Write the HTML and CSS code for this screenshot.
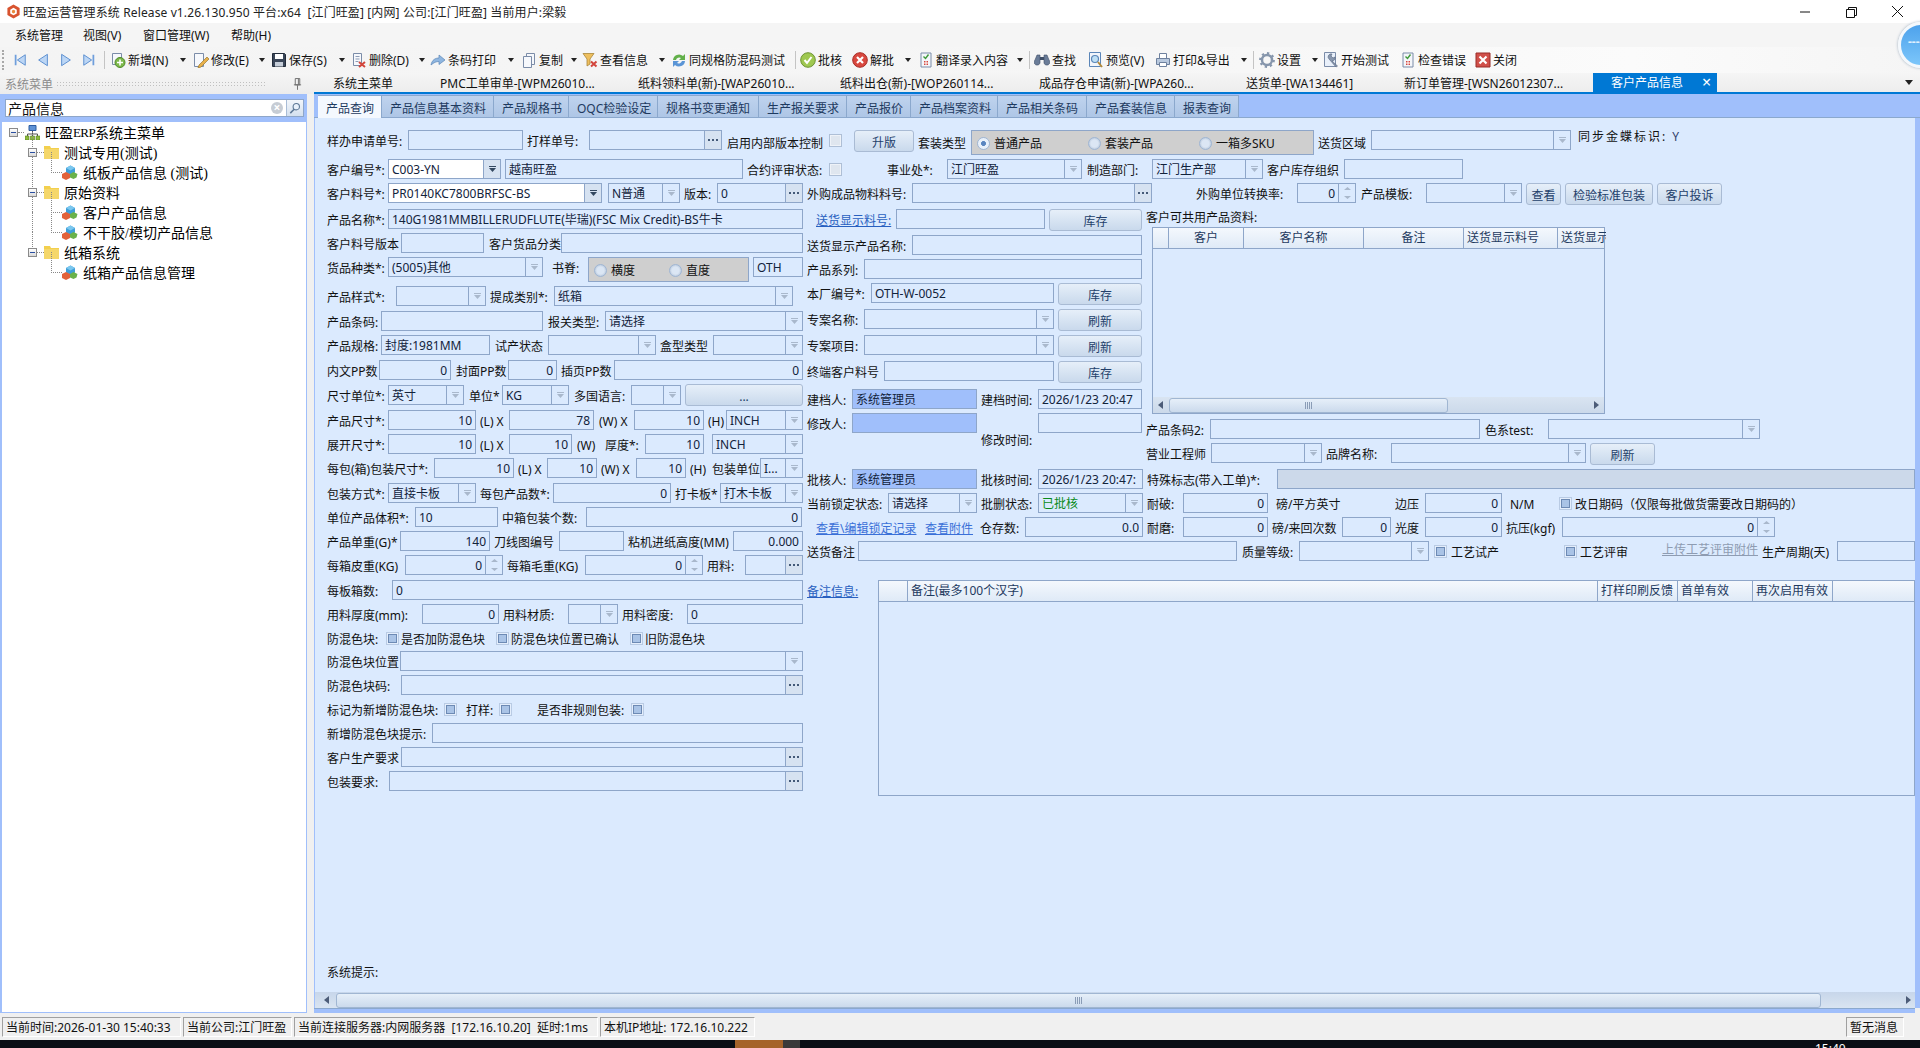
FILE: index.html
```html
<!DOCTYPE html>
<html>
<head>
  <meta charset="utf-8">
  <title>旺盈运营管理系统</title>
  <link rel="stylesheet" href="styles.css">
</head>
<body>
<svg class="defs" width="0" height="0">
  <symbol id="i-first" viewBox="0 0 16 16"><path d="M2 2h2v12H2z" fill="#6f9fdc"/><path d="M14 2v12L5 8z" fill="#bcd6f5" stroke="#4f86cc"/></symbol>
  <symbol id="i-prev" viewBox="0 0 16 16"><path d="M13 1.500v13L3 8z" fill="#bcd6f5" stroke="#4f86cc"/></symbol>
  <symbol id="i-next" viewBox="0 0 16 16"><path d="M3 1.500v13L13 8z" fill="#bcd6f5" stroke="#4f86cc"/></symbol>
  <symbol id="i-last" viewBox="0 0 16 16"><path d="M12 2h2v12h-2z" fill="#6f9fdc"/><path d="M2 2v12l9-6z" fill="#bcd6f5" stroke="#4f86cc"/></symbol>
  <symbol id="i-new" viewBox="0 0 16 16"><path d="M2.500 1.500h9v11h-9z" fill="#f6f8fc" stroke="#7b8ca8"/><circle cx="10" cy="10.500" r="5" fill="#7cb84a" stroke="#4f8a2a"/><path d="M10 7.500v6M7 10.500h6" stroke="#fff" stroke-width="1.600"/></symbol>
  <symbol id="i-edit" viewBox="0 0 16 16"><path d="M1.500 1.500h9v13h-9z" fill="#f6f8fc" stroke="#7b8ca8"/><path d="M14 5l2 2-8 8-3 1 1-3z" fill="#e8b04a" stroke="#9a7a30" stroke-width=".7"/></symbol>
  <symbol id="i-save" viewBox="0 0 16 16"><path d="M1.500 1.500h12l1 1v12h-13z" fill="#3a4658" stroke="#222c3a"/><path d="M4 2h8v5H4z" fill="#fff"/><path d="M4 10h8v4.500H4z" fill="#c6ced9"/></symbol>
  <symbol id="i-del" viewBox="0 0 16 16"><path d="M2.500 1.500h8v12h-8z" fill="#f6f8fc" stroke="#7b8ca8"/><path d="M4.500 4.500h4M4.500 7h4M4.500 9.500h3" stroke="#8c9bb5"/><path d="M8 10l6 5M14 10l-6 5" stroke="#d2453c" stroke-width="2"/></symbol>
  <symbol id="i-send" viewBox="0 0 16 16"><path d="M1 13c1-5 4-7 8-7V3l6 5-6 4.500V9.500c-3 0-5 1-8 3.500z" fill="#8fb6e0" stroke="#5b86b8" stroke-width=".7"/></symbol>
  <symbol id="i-copy" viewBox="0 0 16 16"><path d="M5.500 1.500h8v11h-8z" fill="#f6f8fc" stroke="#7b8ca8"/><path d="M2.500 4.500h8v11h-8z" fill="#f6f8fc" stroke="#7b8ca8"/></symbol>
  <symbol id="i-view" viewBox="0 0 16 16"><path d="M1 1.500h11L8 7v5l-3 2V7z" fill="#eebf5e" stroke="#a9863a" stroke-width=".8"/><path d="M9 9.500l5.500 5M14.500 9.500L9 14.500" stroke="#d2453c" stroke-width="2"/></symbol>
  <symbol id="i-sync" viewBox="0 0 16 16"><path d="M2 8a6 6 0 0 1 10-4l2-2v6H8l2-2a3.500 3.500 0 0 0-5 2z" fill="#62b04a"/><path d="M14 9a6 6 0 0 1-10 4l-2 2V9h6l-2 2a3.500 3.500 0 0 0 5-2z" fill="#5b95d6"/></symbol>
  <symbol id="i-ok" viewBox="0 0 16 16"><circle cx="8" cy="8" r="7.300" fill="#9fc850" stroke="#6e9434"/><path d="M4.500 8l2.500 3 4.500-6" fill="none" stroke="#fff" stroke-width="2"/></symbol>
  <symbol id="i-no" viewBox="0 0 16 16"><circle cx="8" cy="8" r="7.300" fill="#d8483f" stroke="#a92c26"/><path d="M5 5l6 6M11 5l-6 6" stroke="#fff" stroke-width="2.200"/></symbol>
  <symbol id="i-list" viewBox="0 0 16 16"><path d="M3 1h10v14H3z" fill="#f4f6fa" stroke="#7b8ca8"/><path d="M5.500 4.500l2 2 3-4" fill="none" stroke="#3f9a3a" stroke-width="1.400"/><path d="M6 9h4v4H6z" fill="#d2453c"/><path d="M6 11h4M8 9v4" stroke="#fff"/></symbol>
  <symbol id="i-find" viewBox="0 0 16 16"><path d="M1 8l2-5h3v8a3 3 0 1 1-5-3zM15 8l-2-5h-3v8a3 3 0 1 0 5-3z" fill="#6a7c98" stroke="#3f4f68" stroke-width=".6"/><path d="M6 5h4v3H6z" fill="#3f4f68"/></symbol>
  <symbol id="i-zoom" viewBox="0 0 16 16"><path d="M1.500 .5h11v14h-11z" fill="#f1f5fb" stroke="#5b86b8"/><circle cx="7" cy="7" r="3.500" fill="#bfe0f5" stroke="#5b86b8" stroke-width="1.200"/><path d="M10 10l4 5" stroke="#b48a3a" stroke-width="2"/></symbol>
  <symbol id="i-print" viewBox="0 0 16 16"><path d="M4.500 1.500h7v5h-7z" fill="#fff" stroke="#6e819e"/><path d="M1.500 6.500h13v6h-13z" fill="#b9c9de" stroke="#6e819e"/><path d="M4.500 10.500h7v4h-7z" fill="#fff" stroke="#6e819e"/></symbol>
  <symbol id="i-gear" viewBox="0 0 16 16"><circle cx="8" cy="8" r="5" fill="none" stroke="#8696ac" stroke-width="2.500"/><circle cx="8" cy="8" r="6.800" fill="none" stroke="#8696ac" stroke-width="2.200" stroke-dasharray="2.300 3"/></symbol>
  <symbol id="i-tool" viewBox="0 0 16 16"><path d="M1.500 .5h11v14h-11z" fill="#e9f0fa" stroke="#7b8ca8"/><path d="M13 15L6 7a3 3 0 0 1 3-5l-1 2 2 2 2-1a3 3 0 0 1-3 4l5.500 5z" fill="#8796ad" stroke="#56657e" stroke-width=".6"/></symbol>
  <symbol id="i-close" viewBox="0 0 16 16"><path d="M1 1h14v14H1z" fill="#d0504a" stroke="#9a2c28"/><path d="M4.500 4.500l7 7M11.500 4.500l-7 7" stroke="#fff" stroke-width="2.200"/></symbol>
  <symbol id="i-net" viewBox="0 0 15 15"><path d="M4 .5h7v5H4z" fill="#5f92d6" stroke="#2d5ca0"/><path d="M7.500 6v3M2.500 11V9h10v2M7.500 9v2" fill="none" stroke="#555"/><path d="M0 11h4v4H0zM5.500 11h4v4h-4zM11 11h4v4h-4z" fill="#8dbb3c" stroke="#56801e" stroke-width=".6"/></symbol>
  <symbol id="i-folder" viewBox="0 0 15 15"><path d="M0 1h6l1 2h8v11H0z" fill="#f3d04e"/><path d="M0 4h15v10H0z" fill="#f5d76a"/></symbol>
  <symbol id="i-cube" viewBox="0 0 16 16"><path d="M4 4l4.500-2.500L13 4v4.500L8.500 11 4 8.500z" fill="#3f9fd8"/><path d="M4 4l4.500 2.500L13 4 8.500 1.500z" fill="#7cc7ee"/><path d="M0 10l4-2 4 2v4l-4 2-4-2z" fill="#e3623a"/><path d="M8 10l3.500-2 4 2-1 3.500-3 1.500-3.500-1.500z" fill="#6ab24a"/></symbol>
  <symbol id="i-logo" viewBox="0 0 16 16"><path d="M8 .5l6.500 3.700v7.600L8 15.500l-6.500-3.700V4.200z" fill="#d8532f"/><path d="M8 4l3.500 2v4L8 12l-3.500-2V6z" fill="#fff"/><path d="M8 6l1.700 1v2L8 10 6.300 9V7z" fill="#e98a3c"/></symbol>
</svg>

<div class="title-bar">
  <svg class="logo"><use href="#i-logo"/></svg>
  <span class="title-text">旺盈运营管理系统 Release v1.26.130.950 平台:x64&nbsp; [江门旺盈] [内网] 公司:[江门旺盈] 当前用户:梁毅</span>
  <span class="win-btns">
    <svg class="win-btn" viewBox="0 0 46 23"><path d="M18 12h10" stroke="#111"/></svg>
    <svg class="win-btn" viewBox="0 0 46 23"><path d="M18.500 9.500h8v8h-8zM20.500 9.500v-2h8v8h-2" fill="none" stroke="#111"/></svg>
    <svg class="win-btn" viewBox="0 0 46 23"><path d="M18 6l11 11M29 6L18 17" stroke="#111"/></svg>
  </span>
</div>

<div class="menu-bar">
  <span class="menu-item w68">系统管理</span>
  <span class="menu-item w60">视图(V)</span>
  <span class="menu-item w88">窗口管理(W)</span>
  <span class="menu-item">帮助(H)</span>
</div>

<div class="tool-bar">
  <span class="grip"></span>
  <svg class="nav"><use href="#i-first"/></svg>
  <svg class="nav"><use href="#i-prev"/></svg>
  <svg class="nav"><use href="#i-next"/></svg>
  <svg class="nav"><use href="#i-last"/></svg>
  <span class="sep"></span>
  <span class="tb w70"><svg><use href="#i-new"/></svg>新增(N)</span><i class="ar w13"></i>
  <span class="tb w66"><svg><use href="#i-edit"/></svg>修改(E)</span><i class="ar w12"></i>
  <span class="tb w68"><svg><use href="#i-save"/></svg>保存(S)</span><i class="ar w12"></i>
  <span class="tb w68"><svg><use href="#i-del"/></svg>删除(D)</span><i class="ar w11"></i>
  <span class="tb w78"><svg><use href="#i-send"/></svg>条码打印</span><i class="ar w13"></i>
  <span class="tb w50"><svg><use href="#i-copy"/></svg>复制</span><i class="ar w11"></i>
  <span class="tb w77"><svg><use href="#i-view"/></svg>查看信息</span><i class="ar w12"></i>
  <span class="tb w124"><svg><use href="#i-sync"/></svg>同规格防混码测试</span>
  <span class="sep2"></span>
  <span class="tb w52"><svg><use href="#i-ok"/></svg>批核</span>
  <span class="tb w53"><svg><use href="#i-no"/></svg>解批</span><i class="ar w13"></i>
  <span class="tb w99"><svg><use href="#i-list"/></svg>翻译录入内容</span><i class="ar w12"></i>
  <span class="sep2"></span>
  <span class="tb w54"><svg><use href="#i-find"/></svg>查找</span>
  <span class="tb w67"><svg><use href="#i-zoom"/></svg>预览(V)</span>
  <span class="tb w86"><svg><use href="#i-print"/></svg>打印&amp;导出</span><i class="ar w12"></i>
  <span class="sep3"></span>
  <span class="tb w53"><svg><use href="#i-gear"/></svg>设置</span><i class="ar w11"></i>
  <span class="tb w77"><svg><use href="#i-tool"/></svg>开始测试</span>
  <span class="tb w75"><svg><use href="#i-list"/></svg>检查错误</span>
  <span class="tb"><svg><use href="#i-close"/></svg>关闭</span>
</div>
<div class="float-ball"><span>---</span></div>

<div class="middle">
  <div class="side">
    <div class="side-head">
      <span>系统菜单</span>
      <span class="side-dots"></span>
      <svg class="pin" viewBox="0 0 10 14"><path d="M2.500 1.500h5v7h-5zM1 8.500h8M5 9v5M6 2v6" fill="none" stroke="#666"/></svg>
    </div>
    <div class="side-body">
      <div class="search">
        <span class="search-text">产品信息</span>
        <span class="search-clear">×</span>
        <span class="search-btn"><svg viewBox="0 0 14 14"><circle cx="8.500" cy="5.500" r="3.700" fill="#e8f1fb" stroke="#5d7896" stroke-width="1.300"/><path d="M6 8.500L1.500 13" stroke="#5d7896" stroke-width="1.800"/></svg></span>
      </div>
      <div class="tree">
        <div class="node lv1"><i class="box"></i><svg class="t-icon"><use href="#i-net"/></svg>旺盈<span class="latin">ERP</span>系统主菜单</div>
        <div class="node lv2"><i class="box"></i><svg class="t-icon"><use href="#i-folder"/></svg>测试专用(测试)</div>
        <div class="node lv3"><svg class="t-icon"><use href="#i-cube"/></svg>纸板产品信息 (测试)</div>
        <div class="node lv2"><i class="box"></i><svg class="t-icon"><use href="#i-folder"/></svg>原始资料</div>
        <div class="node lv3"><svg class="t-icon"><use href="#i-cube"/></svg>客户产品信息</div>
        <div class="node lv3"><svg class="t-icon"><use href="#i-cube"/></svg>不干胶/模切产品信息</div>
        <div class="node lv2"><i class="box"></i><svg class="t-icon"><use href="#i-folder"/></svg>纸箱系统</div>
        <div class="node lv3 end"><svg class="t-icon"><use href="#i-cube"/></svg>纸箱产品信息管理</div>
      </div>
    </div>
  </div>

  <div class="work">
    <div class="doc-tabs">
      <span class="doc-tab w107">系统主菜单</span>
      <span class="doc-tab w198">PMC工单审单-[WPM26010...</span>
      <span class="doc-tab w202">纸料领料单(新)-[WAP26010...</span>
      <span class="doc-tab w199">纸料出仓(新)-[WOP260114...</span>
      <span class="doc-tab w207">成品存仓申请(新)-[WPA260...</span>
      <span class="doc-tab w158">送货单-[WA134461]</span>
      <span class="doc-tab w189">新订单管理-[WSN26012307...</span>
      <span class="doc-active">客户产品信息<b>×</b></span>
      <i class="doc-more"></i>
    </div>
    <div class="tabs">
      <span class="tab tab-on w64">产品查询</span>
      <span class="tab w112">产品信息基本资料</span>
      <span class="tab w75">产品规格书</span>
      <span class="tab w89">OQC检验设定</span>
      <span class="tab w101">规格书变更通知</span>
      <span class="tab w88">生产报关要求</span>
      <span class="tab w64">产品报价</span>
      <span class="tab w87">产品档案资料</span>
      <span class="tab w89">产品相关条码</span>
      <span class="tab w88">产品套装信息</span>
      <span class="tab w64">报表查询</span>
    </div>

    <div class="form">
      <div class="row">
        <span class="lb w81">样办申请单号:</span><span class="fd w115"></span>
        <span class="lb w62 g4">打样单号:</span><span class="fd e w133"></span>
        <span class="lb low w102 g5">启用内部版本控制</span><i class="cb off"></i>
        <span class="btn w60 g12">升版</span>
        <span class="lb low w53 g4">套装类型</span>
        <span class="group w343">
          <span class="radio w111"><i class="dot on"></i>普通产品</span>
          <span class="radio w111"><i class="dot"></i>套装产品</span>
          <span class="radio"><i class="dot"></i>一箱多SKU</span>
        </span>
        <span class="lb low w53 g4">送货区域</span><span class="fd c w200"></span>
        <span class="lb sync g7">同步金蝶标识: <em>Y</em></span>
      </div>
      <div class="row m9">
        <span class="lb w61">客户编号*:</span><span class="fd c ink w113">C003-YN</span>
        <span class="fd w238 g4">越南旺盈</span>
        <span class="lb w82 g4">合约评审状态:</span><i class="cb off"></i>
        <span class="lb w60 g45">事业处*:</span><span class="fd c w135">江门旺盈</span>
        <span class="lb w65 g5">制造部门:</span><span class="fd c w111">江门生产部</span>
        <span class="lb w77 g4">客户库存组织</span><span class="fd w119"></span>
      </div>
      <div class="row m4">
        <span class="lb w61">客户料号*:</span><span class="fd c ink w214">PR0140KC7800BRFSC-BS</span>
        <span class="fd c w72 g6">N普通</span>
        <span class="lb w33 g4">版本:</span><span class="fd e w86">0</span>
        <span class="lb w105 g4">外购成品物料料号:</span><span class="fd e w240"></span>
        <span class="lb w101 g44">外购单位转换率:</span><span class="fd s r w59">0</span>
        <span class="lb w65 g5">产品模板:</span><span class="fd c w96"></span>
        <span class="btn w35 g4">查看</span><span class="btn w88 g4">检验标准包装</span><span class="btn w65 g4">客户投诉</span>
      </div>

      <div class="main">
        <div class="col-left">
          <div class="row"><span class="lb w61">产品名称*:</span><span class="fd w415">140G1981MMBILLERUDFLUTE(毕瑞)(FSC Mix Credit)-BS牛卡</span></div>
          <div class="row m4"><span class="lb w74">客户料号版本</span><span class="fd w83"></span><span class="lb w72 g5">客户货品分类</span><span class="fd w242"></span></div>
          <div class="row m4">
            <span class="lb w61">货品种类*:</span><span class="fd c w155">(5005)其他</span>
            <span class="lb w36 g9">书脊:</span>
            <span class="group w161"><span class="radio w75"><i class="dot"></i>横度</span><span class="radio"><i class="dot"></i>直度</span></span>
            <span class="fd w50 g4">OTH</span>
          </div>
          <div class="row m9"><span class="lb w69">产品样式*:</span><span class="fd c w90"></span><span class="lb w64 g4">提成类别*:</span><span class="fd c w239">纸箱</span></div>
          <div class="row m5"><span class="lb w54">产品条码:</span><span class="fd w162"></span><span class="lb w57 g5">报关类型:</span><span class="fd c w198">请选择</span></div>
          <div class="row m4"><span class="lb w54">产品规格:</span><span class="fd w109">封度:1981MM</span><span class="lb w53 g5">试产状态</span><span class="fd c w108"></span><span class="lb w53 g4">盒型类型</span><span class="fd c w90"></span></div>
          <div class="row m5"><span class="lb w52">内文PP数</span><span class="fd r w72">0</span><span class="lb w52 g5">封面PP数</span><span class="fd r w49">0</span><span class="lb w53 g4">插页PP数</span><span class="fd r w189">0</span></div>
          <div class="row m5">
            <span class="lb w61">尺寸单位*:</span><span class="fd c w76">英寸</span>
            <span class="lb w33 g5">单位*</span><span class="fd c w67">KG</span>
            <span class="lb w57 g5">多国语言:</span><span class="fd c w50"></span>
            <span class="btn up w118 g4">...</span>
          </div>
          <div class="row m5">
            <span class="lb w61">产品尺寸*:</span><span class="fd r w88">10</span><span class="lb w29 g4">(L) X</span>
            <span class="fd r w85">78</span><span class="lb w35 g5">(W) X</span>
            <span class="fd r w70">10</span><span class="lb w18 g4">(H)</span><span class="fd c w77">INCH</span>
          </div>
          <div class="row m4">
            <span class="lb w61">展开尺寸*:</span><span class="fd r w88">10</span><span class="lb w29 g4">(L) X</span>
            <span class="fd r w63">10</span><span class="lb w28 g5">(W)</span><span class="lb w40">厚度*:</span>
            <span class="fd r w59">10</span><span class="fd c w91 g8">INCH</span>
          </div>
          <div class="row m4">
            <span class="lb w107">每包(箱)包装尺寸*:</span><span class="fd r w80">10</span><span class="lb w29 g4">(L) X</span>
            <span class="fd r w50">10</span><span class="lb w35 g4">(W) X</span>
            <span class="fd r w50">10</span><span class="lb w22 g4">(H)</span><span class="lb w48">包装单位</span><span class="fd c w43">I...</span>
          </div>
          <div class="row m5"><span class="lb w61">包装方式*:</span><span class="fd c w88">直接卡板</span><span class="lb w73 g4">每包产品数*:</span><span class="fd r w118">0</span><span class="lb w45 g4">打卡板*</span><span class="fd c w83">打木卡板</span></div>
          <div class="row m4"><span class="lb w88">单位产品体积*:</span><span class="fd w83">10</span><span class="lb w84 g4">中箱包装个数:</span><span class="fd r w216">0</span></div>
          <div class="row m4"><span class="lb w73">产品单重(G)*</span><span class="fd r w90">140</span><span class="lb w65 g4">刀线图编号</span><span class="fd w65"></span><span class="lb w105 g4">粘机进纸高度(MM)</span><span class="fd r w70">0.000</span></div>
          <div class="row m4"><span class="lb w78">每箱皮重(KG)</span><span class="fd s r w98">0</span><span class="lb w78 g4">每箱毛重(KG)</span><span class="fd s r w118">0</span><span class="lb w38 g4">用料:</span><span class="fd e w58"></span></div>
          <div class="row m5"><span class="lb w65">每板箱数:</span><span class="fd w411">0</span></div>
          <div class="row m4"><span class="lb w95">用料厚度(mm):</span><span class="fd r w77">0</span><span class="lb w65 g4">用料材质:</span><span class="fd c w50"></span><span class="lb w65 g4">用料密度:</span><span class="fd w116">0</span></div>
          <div class="row m4">
            <span class="lb w59">防混色块:</span><i class="cb"></i><span class="lb w95 g2">是否加防混色块</span>
            <i class="cb"></i><span class="lb w119 g2">防混色块位置已确认</span>
            <i class="cb"></i><span class="lb g2">旧防混色块</span>
          </div>
          <div class="row m3"><span class="lb w73">防混色块位置</span><span class="fd c w403"></span></div>
          <div class="row m4"><span class="lb w74">防混色块码:</span><span class="fd e w402"></span></div>
          <div class="row m4">
            <span class="lb w117">标记为新增防混色块:</span><i class="cb"></i>
            <span class="lb w33 g9">打样:</span><i class="cb"></i>
            <span class="lb w94 g25">是否非规则包装:</span><i class="cb"></i>
          </div>
          <div class="row m4"><span class="lb w105">新增防混色块提示:</span><span class="fd w371"></span></div>
          <div class="row m4"><span class="lb w74">客户生产要求</span><span class="fd e w402"></span></div>
          <div class="row m4"><span class="lb w62">包装要求:</span><span class="fd e w414"></span></div>
        </div>

        <div class="col-right">
          <div class="upper">
            <div class="col-mid">
              <div class="row"><a class="lb link w80 g9">送货显示料号:</a><span class="fd w149"></span><span class="btn w93 g4">库存</span></div>
              <div class="row m6"><span class="lb w105">送货显示产品名称:</span><span class="fd w230"></span></div>
              <div class="row m4"><span class="lb w57">产品系列:</span><span class="fd w278"></span></div>
              <div class="row m4"><span class="lb w64">本厂编号*:</span><span class="fd w183">OTH-W-0052</span><span class="btn w84 g4">库存</span></div>
              <div class="row m6"><span class="lb w57">专案名称:</span><span class="fd c w190"></span><span class="btn w84 g4">刷新</span></div>
              <div class="row m6"><span class="lb w57">专案项目:</span><span class="fd c w190"></span><span class="btn w84 g4">刷新</span></div>
              <div class="row m6"><span class="lb w77">终端客户料号</span><span class="fd w170"></span><span class="btn w84 g4">库存</span></div>
              <div class="row m8"><span class="lb w45">建档人:</span><span class="fd blue w125">系统管理员</span><span class="lb w57 g4">建档时间:</span><span class="fd w104">2026/1/23 20:47</span></div>
              <div class="row m4"><span class="lb w45">修改人:</span><span class="fd blue w125"></span><span class="lb lower-lb w57 g4">修改时间:</span><span class="fd w104"></span></div>
            </div>
            <div class="col-share">
              <div class="share-title">客户可共用产品资料:</div>
              <div class="grid share w453">
                <div class="gh">
                  <span class="w16"></span><span class="ctr w75">客户</span><span class="ctr w120">客户名称</span><span class="ctr w100">备注</span><span class="w94">送货显示料号</span><span class="w48 cut">送货显示产品名称</span>
                </div>
                <div class="gbody"></div>
                <div class="hscroll">
                  <i class="sa left"></i>
                  <span class="thumb w279"><i></i></span>
                  <i class="sa right"></i>
                </div>
              </div>
              <div class="row m5"><span class="lb w64">产品条码2:</span><span class="fd w270"></span><span class="lb w63 g5">色系test:</span><span class="fd c w212"></span></div>
              <div class="row m4"><span class="lb w65">营业工程师</span><span class="fd c w111"></span><span class="lb w65 g4">品牌名称:</span><span class="fd c w195"></span><span class="btn w65 g4">刷新</span></div>
            </div>
          </div>

          <div class="row">
            <span class="lb w45">批核人:</span><span class="fd blue w125">系统管理员</span>
            <span class="lb w57 g4">批核时间:</span><span class="fd w105">2026/1/23 20:47:</span>
            <span class="lb w130 g4">特殊标志(带入工单)*:</span><span class="fd gray w638"></span>
          </div>
          <div class="row m4">
            <span class="lb w81">当前锁定状态:</span><span class="fd c w89">请选择</span>
            <span class="lb w57 g4">批删状态:</span><span class="fd c green w105">已批核</span>
            <span class="lb w36 g4">耐破:</span><span class="fd r w85">0</span>
            <span class="lb w119 g8">磅/平方英寸</span><span class="lb w30">边压</span><span class="fd r w77">0</span>
            <span class="lb w49 g8">N/M</span><i class="cb"></i><span class="lb g3">改日期码（仅限每批做货需要改日期码的）</span>
          </div>
          <div class="row m4">
            <a class="lb link blue-link w109 g9">查看\编辑锁定记录</a><a class="lb link blue-link w55">查看附件</a>
            <span class="lb w45">仓存数:</span><span class="fd r w118">0.0</span>
            <span class="lb w36 g4">耐磨:</span><span class="fd r w85">0</span>
            <span class="lb w70 g4">磅/来回次数</span><span class="fd r w49">0</span>
            <span class="lb w30 g4">光度</span><span class="fd r w77">0</span>
            <span class="lb w56 g4">抗压(kgf)</span><span class="fd s r w213">0</span>
          </div>
          <div class="row m4">
            <span class="lb w51">送货备注</span><span class="fd w379"></span>
            <span class="lb w57 g5">质量等级:</span><span class="fd c w130"></span>
            <i class="cb g5"></i><span class="lb w113 g4">工艺试产</span>
            <i class="cb"></i><span class="lb w82 g3">工艺评审</span>
            <a class="lb link gray-link w100">上传工艺评审附件</a><span class="lb w75">生产周期(天)</span><span class="fd w78"></span>
          </div>
          <div class="note">
            <a class="lb link w71">备注信息:</a>
            <div class="grid remark w1037">
              <div class="gh">
                <span class="w29"></span><span class="w690">备注(最多100个汉字)</span><span class="w80">打样印刷反馈</span><span class="w75">首单有效</span><span class="w80">再次启用有效</span>
              </div>
            </div>
          </div>
        </div>
      </div>

      <div class="tip">系统提示:</div>
    </div>
    <div class="hscroll form-scroll">
      <i class="sa left"></i>
      <span class="thumb w1485"><i></i></span>
      <i class="sa right"></i>
    </div>
    <div class="work-foot"></div>
  </div>
</div>

<div class="status">
  <span class="cell w179">当前时间:2026-01-30 15:40:33</span>
  <span class="cell w109">当前公司:江门旺盈</span>
  <span class="cell w304">当前连接服务器:内网服务器&nbsp; [172.16.10.20]&nbsp; 延时:1ms</span>
  <span class="cell w155">本机IP地址: 172.16.10.222</span>
  <span class="cell msg">暂无消息</span>
</div>
<div class="taskbar">
  <span class="task-on"></span><span class="task-gray"></span>
  <span class="clock">15:40</span>
</div>
</body>
</html>
```

FILE: styles.css
```css
* { box-sizing: border-box; }
html, body { margin: 0; height: 100%; }
body {
  width: 1920px; height: 1048px; overflow: hidden;
  background: #f0f0f0; color: #111;
  font-family: "Noto Sans", "Noto Sans CJK SC", sans-serif; font-size: 12px;
  position: relative;
}
svg { display: block; flex: none; }
.defs { position: absolute; }
i { font-style: normal; display: block; flex: none; }

/* title, menu, toolbar */
.title-bar { height: 23px; background: #fff; display: flex; align-items: center; padding-left: 6px; color: #222; }
.logo { width: 15px; height: 15px; margin-right: 2px; }
.title-text { white-space: nowrap; letter-spacing: .12px; }
.win-btns { margin-left: auto; display: flex; }
.win-btn { width: 46px; height: 23px; }
.menu-bar { height: 24px; background: #f5f5f5; display: flex; align-items: center; padding-left: 15px; }
.menu-item { flex: none; white-space: nowrap; }
.tool-bar {
  height: 26px; display: flex; align-items: center; padding-left: 2px;
  background: linear-gradient(90deg, #f4f4f4, #f6f6f6 60%, #fbfbfb 85%, #f5f5f5);
}
.grip { width: 3px; height: 20px; margin-right: 8px; border-left: 2px dotted #a8a8a8; }
.nav { width: 14px; height: 16px; margin-right: 9px; }
.sep { width: 1px; height: 18px; background: #c4c4c4; margin: 0 5px 0 -1px; flex: none; }
.sep2 { width: 1px; height: 18px; background: #c4c4c4; margin-right: 4px; flex: none; }
.sep3 { width: 1px; height: 18px; background: #c4c4c4; margin-right: 5px; flex: none; }
.tb { display: flex; align-items: center; flex: none; white-space: nowrap; }
.tb svg { width: 16px; height: 16px; margin-right: 2px; }
.ar { height: 8px; position: relative; }
.ar::before { content: ""; position: absolute; left: 0; top: 2px; border: 3.500px solid transparent; border-top: 4px solid #222; border-bottom: 0; }
.float-ball {
  position: absolute; left: 1898px; top: 22px; width: 46px; height: 46px; border-radius: 50%;
  border: 3px solid #f4f8fc; background: linear-gradient(#4da2ec, #7cc6fa); box-shadow: 0 0 3px #9ab;
  color: #dff0ff; padding: 9px 0 0 7px; line-height: 16px; font-weight: bold; z-index: 5;
}

/* left panel */
.middle { height: 940px; display: flex; }
.side { width: 314px; flex: none; display: flex; flex-direction: column; }
.side-head {
  height: 21px; display: flex; align-items: center; padding-left: 5px; color: #8c8c8c;
  background: linear-gradient(#f5f5f5, #ececec);
}
.side-dots { width: 211px; height: 6px; margin-left: 3px; background-image: radial-gradient(#c0c0c0 40%, transparent 45%); background-size: 3px 3px; }
.pin { width: 9px; height: 13px; margin-left: 26px; }
.side-body { width: 307px; height: 919px; background: #a0bffb; padding: 5px 0 0 2px; }
.search {
  width: 299px; height: 18px; margin-left: 3px; background: #fff; border: 1px solid #8ea6c9;
  display: flex; align-items: center; font-size: 14px; padding-left: 2px;
}
.search-text { flex: none; }
.search-clear {
  margin-left: auto; width: 12px; height: 12px; border-radius: 50%; background: #c6ccd4; color: #fff;
  font-size: 12px; line-height: 11px; text-align: center; font-weight: bold;
}
.search-btn { width: 17px; height: 16px; margin-left: 3px; border-left: 1px solid #a8bcd6; background: linear-gradient(#f2f6fb, #d4e0ee); padding: 2px; }
.search-btn svg { width: 12px; height: 12px; }
.tree {
  width: 304px; height: 890px; margin-top: 5px; background: #fff; padding-top: 0;
  font-family: "Liberation Serif", "Noto Sans CJK SC", serif; font-size: 14px;
}
.latin { font-size: 13px; letter-spacing: -.6px; padding-top: 1px; }
.node { height: 20px; display: flex; align-items: center; position: relative; white-space: pre; color: #000; }
.t-icon { width: 15px; height: 15px; }
.box {
  position: absolute; width: 9px; height: 9px; top: 6px; border: 1px solid #8a8a8a; z-index: 1;
  background: linear-gradient(#fff, #d8d8d8);
}
.box::after { content: ""; position: absolute; left: 1px; right: 1px; top: 3px; height: 1px; background: #2a4fa0; }
.lv1 { padding-left: 23px; }
.lv1 .box { left: 7px; }
.lv1 .t-icon { margin-right: 5px; }
.lv2 { padding-left: 42px; }
.lv2 .box { left: 26px; }
.lv2 .t-icon { margin-right: 5px; }
.lv3 { padding-left: 60px; }
.lv3 .t-icon { width: 16px; height: 16px; margin-right: 5px; }
.lv1::before { content: ""; position: absolute; left: 16px; top: 10px; width: 6px; border-top: 1px dotted #888; }
.lv2::before { content: ""; position: absolute; left: 30px; top: -10px; width: 11px; height: 20px; border-left: 1px dotted #888; border-bottom: 1px dotted #888; }
.lv3::before { content: ""; position: absolute; left: 49px; top: -10px; width: 10px; height: 20px; border-left: 1px dotted #888; border-bottom: 1px dotted #888; }
.lv3::after { content: ""; position: absolute; left: 30px; top: -10px; height: 20px; border-left: 1px dotted #888; }
.lv3.end::after { display: none; }

/* tab strips */
.work { width: 1606px; flex: none; display: flex; flex-direction: column; }
.doc-tabs {
  height: 21px; display: flex; align-items: center; padding-left: 19px; position: relative;
  background: linear-gradient(#f5f5f5, #ededed); border-bottom: 2px solid #0078d4; white-space: nowrap;
}
.doc-tab { flex: none; overflow: hidden; }
.doc-active {
  width: 124px; height: 19px; flex: none; background: #0078d4; color: #fff; padding-left: 18px; line-height: 20px; position: relative;
}
.doc-active b { position: absolute; left: 109px; top: 0; font-size: 16px; font-weight: normal; line-height: 19px; }
.doc-more { margin-left: 188px; border: 4px solid transparent; border-top: 5px solid #222; border-bottom: 0; }
.tabs { height: 24px; background: #a0bffb; display: flex; padding: 1px 0 0 4px; border-bottom: 1px solid #8ba8cd; }
.tab {
  flex: none; height: 23px; padding-left: 8px; line-height: 25px; color: #1e3a5f;
  background: linear-gradient(#bfd3ee, #aec6e6); border: 1px solid #8ba8cd; border-left: 0; white-space: nowrap;
}
.tab-on { background: #f4f8fe; border-bottom: 0; height: 24px; }

/* form */
.form { height: 874px; padding: 12px 0 0 12px; background: #dbeafe; border-left: 1px solid #a0bffb; border-right: 5px solid #a0bffb; overflow: hidden; }
.row { display: flex; height: 20px; }
.row > * { flex: none; }
.lb { padding-top: 1px; line-height: 21px; white-space: nowrap; display: block; }
.lb.low { padding-top: 3px; }
.fd {
  height: 20px; border: 1px solid #8ea6c9; padding: 1px 0 0 3px; display: flex; align-items: center;
  white-space: nowrap; overflow: hidden; line-height: 18px; color: #12233c;
}
.r { justify-content: flex-end; padding-right: 3px; }
.c, .e, .s { padding-right: 0; }
.c::after, .e::after, .s::after {
  content: ""; flex: none; width: 16px; height: 18px; margin: -1px 0 0 auto; border-left: 1px solid #8ea6c9;
  background-repeat: no-repeat; background-position: center;
}
.c::after {
  background-image: url("data:image/svg+xml,%3Csvg xmlns='http://www.w3.org/2000/svg' width='7' height='6'%3E%3Cpath d='M0 0h7v1H0zM0 2h7L3.500 6z' fill='%23a9b8cc'/%3E%3C/svg%3E");
}
.e::after {
  background-color: #d6e2f1;
  background-image: url("data:image/svg+xml,%3Csvg xmlns='http://www.w3.org/2000/svg' width='10' height='2'%3E%3Cpath d='M0 0h2v2H0zM4 0h2v2H4zM8 0h2v2H8z' fill='%23445a78'/%3E%3C/svg%3E");
}
.s::after {
  margin-left: 3px;
  background-image: url("data:image/svg+xml,%3Csvg xmlns='http://www.w3.org/2000/svg' width='7' height='14'%3E%3Cpath d='M3.500 1L7 4H0zM3.500 13L7 10H0z' fill='%23a9b8cc'/%3E%3C/svg%3E");
}
.ink { background: #fff; }
.ink::after {
  background-color: #d6e2f1;
  background-image: url("data:image/svg+xml,%3Csvg xmlns='http://www.w3.org/2000/svg' width='7' height='6'%3E%3Cpath d='M0 0h7v1H0zM0 2h7L3.500 6z' fill='%23334860'/%3E%3C/svg%3E");
}
.blue { background: #a0bffb; }
.gray { background: #ccd9ea; }
.green { color: #0a8a1a; }
.btn {
  height: 22px; border: 1px solid #a9bbd4; border-radius: 3px; text-align: center; line-height: 23px; color: #23406a;
  background: linear-gradient(#e6eff9, #c9d9ec);
}
.up { margin-top: -1px; }
.cb {
  width: 13px; height: 13px; margin-top: 4px; border: 1px solid #b9cbe4; background: #a9c3e6;
  box-shadow: inset 0 0 0 1px #e4eefc, inset 0 0 0 2px #6d8ab4;
}
.cb.off { background: #dfe6ef; box-shadow: inset 0 0 0 1px #eef2f8; border-color: #aebfd6; }
.group { height: 25px; background: #cfcfcf; border: 1px solid #8ea6c9; display: flex; align-items: center; padding-left: 5px; }
.radio { display: flex; align-items: center; white-space: nowrap; flex: none; padding-top: 1px; }
.dot {
  width: 13px; height: 13px; border-radius: 50%; margin-right: 4px; border: 1px solid #9fb6d4;
  background: radial-gradient(#dbe6f4 45%, #c2d0e2 70%);
}
.dot.on { background: radial-gradient(#5a86c0 28%, #e8f0fa 34%); }
.sync { padding-top: 0; line-height: 14px; letter-spacing: 2px; }
.sync em { font-style: normal; color: #33406a; letter-spacing: 0; }
.link { color: #2860c0; text-decoration: underline; cursor: pointer; }
.blue-link { color: #3a70d8; }
.gray-link { color: #8e9cb2; padding-top: 0; line-height: 17px; }
.lower-lb { position: relative; top: 16px; }

.main { display: flex; margin-top: 6px; }
.col-left { width: 480px; flex: none; }
.col-right { width: 1108px; flex: none; }
.upper { display: flex; height: 260px; }
.col-mid { width: 339px; flex: none; }
.col-share { width: 769px; flex: none; }
.share-title { height: 18px; line-height: 17px; }
.grid { border: 1px solid #8ea6c9; display: flex; flex-direction: column; color: #1e3a5f; }
.share { height: 187px; margin-left: 6px; }
.remark { height: 216px; flex: none; }
.gh { height: 21px; flex: none; display: flex; background: linear-gradient(#f4f8fd, #dfeaf7); border-bottom: 1px solid #8ea6c9; white-space: nowrap; }
.gh span { flex: none; border-right: 1px solid #8ea6c9; line-height: 20px; padding-left: 3px; overflow: hidden; }
.gh .ctr { text-align: center; padding-left: 0; }
.gh .cut { border-right: 0; }
.gbody { flex: 1; }
.hscroll { height: 16px; flex: none; display: flex; align-items: center; background: linear-gradient(#d9e4f1, #cbd9ea); }
.sa { flex: none; border: 4px solid transparent; }
.sa.left { border-right: 5px solid #4c5c78; border-left: 0; margin: 0 6px 0 5px; }
.sa.right { border-left: 5px solid #4c5c78; border-right: 0; margin: 0 0 0 auto; }
.thumb {
  height: 15px; flex: none; border: 1px solid #a0b6d2; border-radius: 3px; display: flex; align-items: center; justify-content: center;
  background: linear-gradient(#e6eff9, #cbdaec);
}
.thumb i { width: 7px; height: 7px; background: repeating-linear-gradient(90deg, #8a9cb6 0 1px, transparent 1px 2px); }
.share .hscroll .right { margin-right: 5px; }
.note { display: flex; margin-top: 19px; }
.tip { margin-top: 166px; height: 20px; line-height: 21px; }
.form-scroll { padding-left: 5px; background: linear-gradient(#c7d6ea, #d9e4f1); border-left: 1px solid #a0bffb; border-right: 5px solid #a0bffb; }
.form-scroll .sa.left { margin: 0 7px 0 4px; }
.form-scroll .right { margin-right: 4px; }
.work-foot { width: 1601px; height: 5px; background: #a0bffb; border-top: 1px solid #8ba8cd; }

/* status + task bar */
.status { height: 27px; display: flex; align-items: center; padding-left: 2px; gap: 2px; }
.cell {
  height: 20px; border: 1px solid; border-color: #a0a0a0 #fff #fff #a0a0a0; line-height: 20px; padding-left: 3px;
  white-space: nowrap; flex: none;
}
.msg { margin-left: 1089px; width: 58px; }
.taskbar { height: 8px; background: #090d14; overflow: hidden; position: relative; display: flex; }
.task-on { margin-left: 735px; width: 48px; background: #a5632a; }
.task-gray { width: 17px; background: #3a3a3a; }
.clock { position: absolute; left: 1815px; top: 2px; color: #fff; line-height: 14px; }

/* widths and gaps */
.w11{width:11px}.w12{width:12px}.w13{width:13px}.w16{width:16px}.w18{width:18px}.w22{width:22px}.w28{width:28px}.w29{width:29px}
.w30{width:30px}.w33{width:33px}.w35{width:35px}.w36{width:36px}.w38{width:38px}.w40{width:40px}.w43{width:43px}.w45{width:45px}
.w48{width:48px}.w49{width:49px}.w50{width:50px}.w51{width:51px}.w52{width:52px}.w53{width:53px}.w54{width:54px}.w55{width:55px}
.w56{width:56px}.w57{width:57px}.w58{width:58px}.w59{width:59px}.w60{width:60px}.w61{width:61px}.w62{width:62px}.w63{width:63px}
.w64{width:64px}.w65{width:65px}.w66{width:66px}.w67{width:67px}.w68{width:68px}.w69{width:69px}.w70{width:70px}.w71{width:71px}
.w72{width:72px}.w73{width:73px}.w74{width:74px}.w75{width:75px}.w76{width:76px}.w77{width:77px}.w78{width:78px}.w80{width:80px}
.w81{width:81px}.w82{width:82px}.w83{width:83px}.w84{width:84px}.w85{width:85px}.w86{width:86px}.w87{width:87px}.w88{width:88px}
.w89{width:89px}.w90{width:90px}.w91{width:91px}.w93{width:93px}.w94{width:94px}.w95{width:95px}.w96{width:96px}.w98{width:98px}
.w99{width:99px}.w100{width:100px}.w101{width:101px}.w102{width:102px}.w104{width:104px}.w105{width:105px}.w107{width:107px}
.w108{width:108px}.w109{width:109px}.w111{width:111px}.w112{width:112px}.w113{width:113px}.w115{width:115px}.w116{width:116px}
.w117{width:117px}.w118{width:118px}.w119{width:119px}.w120{width:120px}.w124{width:124px}.w125{width:125px}.w130{width:130px}
.w133{width:133px}.w135{width:135px}.w149{width:149px}.w155{width:155px}.w158{width:158px}.w161{width:161px}.w162{width:162px}
.w170{width:170px}.w179{width:179px}.w183{width:183px}.w189{width:189px}.w190{width:190px}.w195{width:195px}.w198{width:198px}
.w199{width:199px}.w200{width:200px}.w202{width:202px}.w207{width:207px}.w212{width:212px}.w213{width:213px}.w214{width:214px}
.w216{width:216px}.w230{width:230px}.w238{width:238px}.w239{width:239px}.w240{width:240px}.w242{width:242px}.w270{width:270px}
.w278{width:278px}.w279{width:279px}.w304{width:304px}.w343{width:343px}.w371{width:371px}.w379{width:379px}.w402{width:402px}
.w403{width:403px}.w411{width:411px}.w414{width:414px}.w415{width:415px}.w453{width:453px}.w638{width:638px}.w690{width:690px}
.w1037{width:1037px}.w1485{width:1485px}
.g2{margin-left:2px}.g3{margin-left:3px}.g4{margin-left:4px}.g5{margin-left:5px}.g6{margin-left:6px}.g7{margin-left:7px}.g8{margin-left:8px}.g9{margin-left:9px}
.g10{margin-left:10px}.g12{margin-left:12px}.g25{margin-left:25px}.g26{margin-left:26px}.g44{margin-left:44px}.g45{margin-left:45px}
.m3{margin-top:3px}.m4{margin-top:4px}.m5{margin-top:5px}.m6{margin-top:6px}.m8{margin-top:8px}.m9{margin-top:9px}
```
